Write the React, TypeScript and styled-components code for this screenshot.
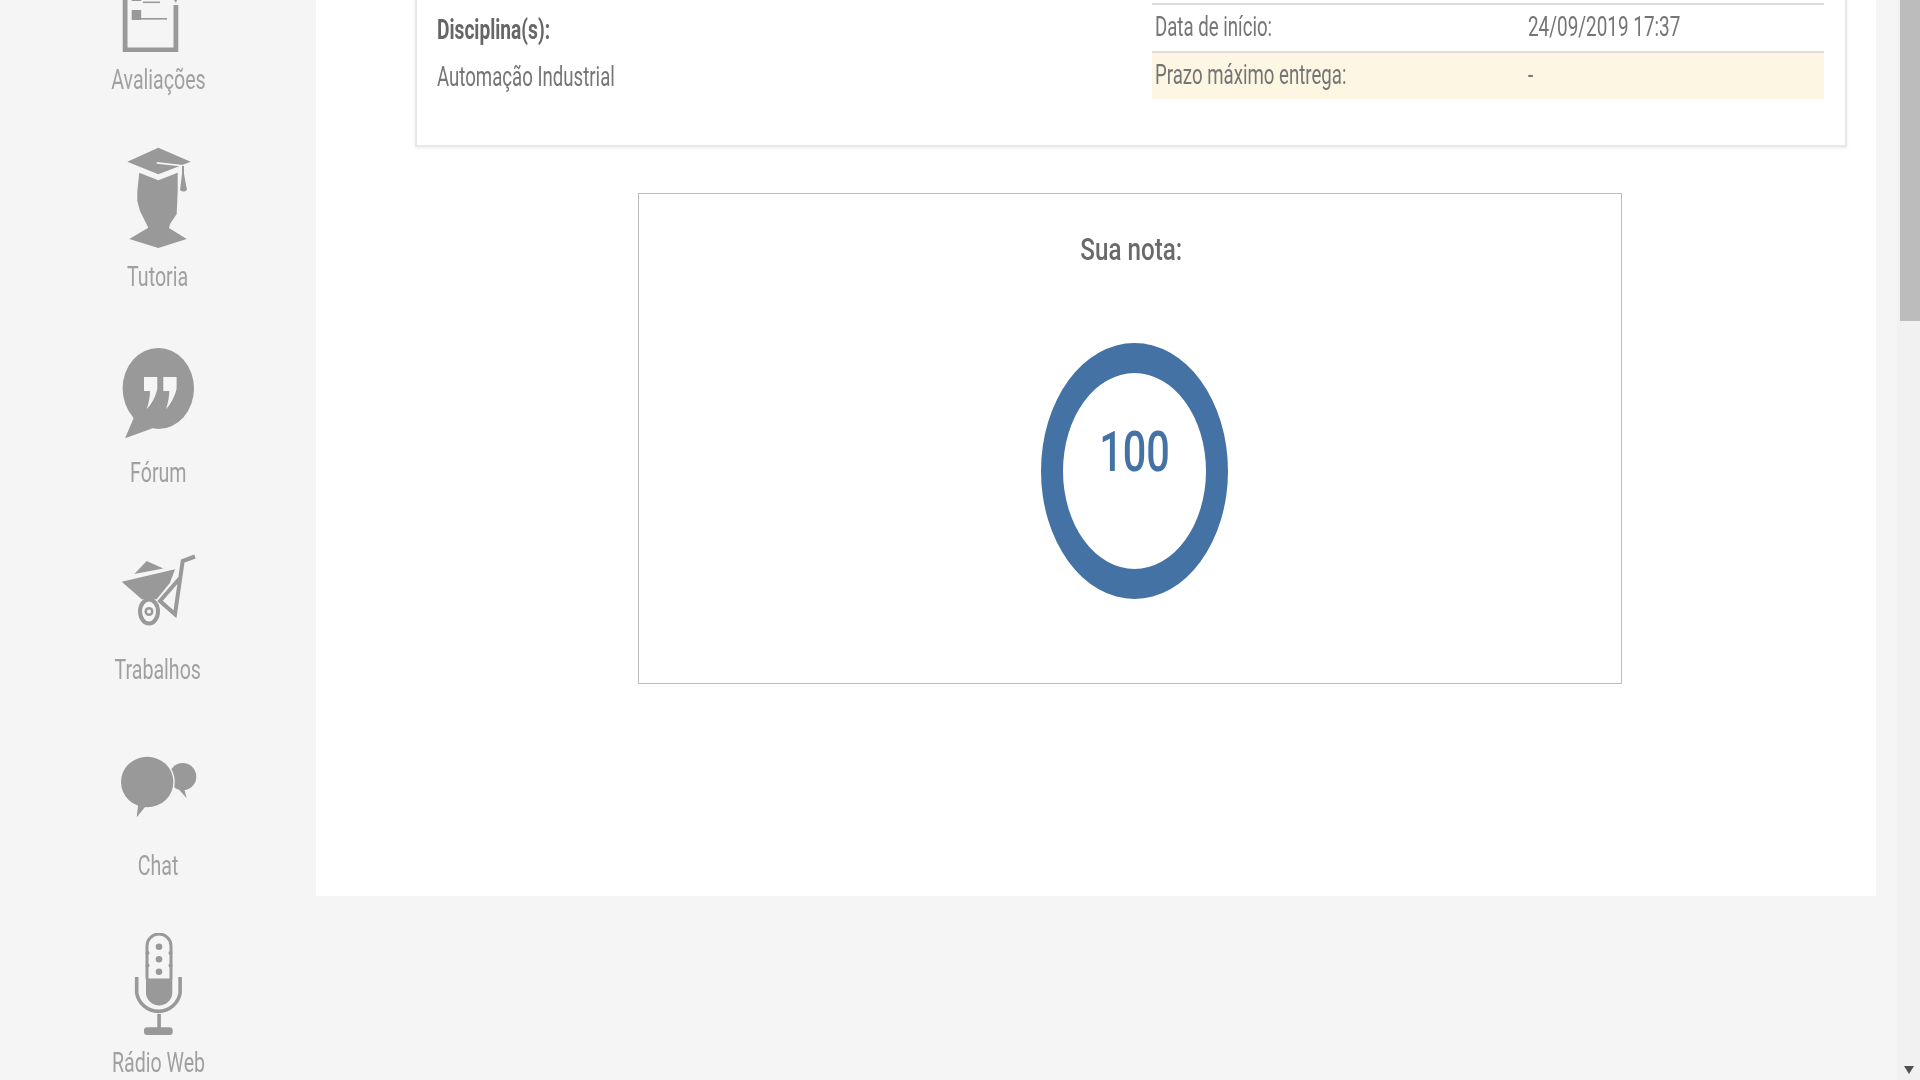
import React from "react";
import styled, { createGlobalStyle } from "styled-components";

const Global = createGlobalStyle`
  html, body { margin: 0; padding: 0; height: 100%; overflow: hidden; background: #f5f5f5; }
  body { font-family: Roboto, "Liberation Sans", sans-serif; }
`;

const Page = styled.div`
  display: flex;
  width: 1920px;
  height: 1080px;
  overflow: hidden;
  background: #f5f5f5;
`;

const Sidebar = styled.nav`
  flex: 0 0 316px;
  display: flex;
  flex-direction: column;
  align-items: center;
  margin-top: -50px;
`;

const NavItem = styled.a`
  flex: 0 0 196.5px;
  display: flex;
  flex-direction: column;
  align-items: center;
`;

const NavIcon = styled.svg`
  flex: 0 0 110px;
  width: 80px;
  height: 110px;
  fill: #999;
  stroke: none;
`;

const NavLabel = styled.span`
  height: 40px;
  line-height: 40px;
  font-size: 28px;
  color: #a0a0a0;
  white-space: nowrap;
  transform: scaleX(0.7);
  filter: blur(0.4px);
`;

const Main = styled.main`
  flex: 0 0 1560px;
  height: 956px;
  margin-top: -60px;
  padding-left: 99px;
  box-sizing: border-box;
  background: #fff;
`;

const Card = styled.section`
  display: flex;
  justify-content: space-between;
  box-sizing: border-box;
  width: 1432px;
  height: 207px;
  padding: 61px 21px 0 20px;
  border: 2px solid #e8e8e8;
  box-shadow: 0 1px 3px rgba(0, 0, 0, 0.08);
`;

const Subject = styled.div`
  display: flex;
  flex-direction: column;
  margin-top: 7px;
  gap: 7px;
`;

const Text = styled.span<{ $x: number; $weight?: number; $color?: string }>`
  display: block;
  height: 40px;
  line-height: 40px;
  font-size: 27px;
  font-weight: ${(p) => p.$weight ?? 400};
  color: ${(p) => p.$color ?? "#757575"};
  white-space: nowrap;
  transform: scaleX(${(p) => p.$x});
  transform-origin: left center;
  filter: blur(0.35px);
`;

const InfoTable = styled.div`
  width: 672px;
  display: flex;
  flex-direction: column;
`;

const InfoRow = styled.div<{ $highlight?: boolean }>`
  display: grid;
  grid-template-columns: 373px 1fr;
  align-items: start;
  box-sizing: border-box;
  height: 48px;
  padding: 2px 0 0 3px;
  border-top: 2px solid #ddd;
  background: ${(p) => (p.$highlight ? "#fdf6e3" : "#fff")};
`;

const ScoreBox = styled.section`
  position: relative;
  display: flex;
  flex-direction: column;
  align-items: center;
  box-sizing: border-box;
  width: 984px;
  height: 491px;
  margin: 46px 0 0 223px;
  padding-top: 35px;
  border: 1px solid #bdbdbd;
`;

const ScoreTitle = styled.h2`
  margin: 0 0 0 2px;
  height: 42px;
  line-height: 42px;
  font-size: 31px;
  font-weight: 500;
  color: #6a6a6a;
  white-space: nowrap;
  transform: scaleX(0.78);
  filter: blur(0.35px);
`;

const Ring = styled.div`
  position: relative;
  box-sizing: border-box;
  width: 187px;
  height: 256px;
  margin: 72px 0 0 9px;
  border-style: solid;
  border-color: #4472a4;
  border-width: 30px 22px;
  border-radius: 50%;
`;

const RingValue = styled.span`
  position: absolute;
  left: 0;
  right: 0;
  top: 51px;
  text-align: center;
  font-size: 56px;
  line-height: 56px;
  font-weight: 500;
  color: #4472a4;
  transform: scaleX(0.74);
  filter: blur(0.3px);
`;

const Gutter = styled.div`
  flex: 0 0 21px;
`;

const Scrollbar = styled.div`
  flex: 0 0 23px;
  display: flex;
  flex-direction: column;
  align-items: flex-end;
  justify-content: space-between;
  background: #f1f1f1;
`;

const Thumb = styled.div`
  width: 20px;
  height: 321px;
  background: #bcbcbc;
`;

const ArrowDown = styled.div`
  width: 0;
  height: 0;
  margin: 0 6px 6px 0;
  border-left: 5px solid transparent;
  border-right: 5px solid transparent;
  border-top: 8px solid #505050;
`;

const BG = "#f5f5f5";

const IconAvaliacoes = () => (
  <NavIcon viewBox="0 0 80 110">
    <rect x="13.7" y="41" width="9.5" height="10" />
    <rect x="25" y="51.5" width="17" height="1.6" />
    <rect x="13.7" y="60" width="9.5" height="10" />
    <rect x="23" y="68" width="26" height="1.6" />
    <path d="M4.7 40H9.5V97.5H55.5V55H60.3V102H4.7Z" />
    <path d="M56 50L59 50L58 53Z" />
  </NavIcon>
);

const IconTutoria = () => (
  <NavIcon viewBox="0 0 80 110">
    <path d="M40.3 .7L72.7 14.7L40.3 27.3L9.3 14.7Z" />
    <path d="M21.3 25.7L40.3 33.3L59.7 25.7V44L58.7 67L52 77L51 81L68.7 92L40.3 101L11.3 92L30.3 80.7L22 64L19.3 54V44Z" />
    <path d="M38.7 15L65.3 18V27H64.2V19.5L38.7 16.8Z" fill={BG} />
    <path d="M64 19H66V27L69 43Q65.5 46 62 43L64 27Z" />
  </NavIcon>
);

const IconForum = () => (
  <NavIcon viewBox="0 0 80 110">
    <ellipse cx="40.3" cy="45.5" rx="35.7" ry="40.5" />
    <path d="M17 72L7 95.3L34 85.5Z" />
    <path d="M26 34H39.3V46Q37 57 28.7 66.3Q32 56 32 48H26Z" fill={BG} />
    <path d="M45.3 34H58.6V46Q56 57 48 66.3Q51.3 56 51.3 48H45.3Z" fill={BG} />
  </NavIcon>
);

const IconTrabalhos = () => (
  <NavIcon viewBox="0 0 80 110">
    <path d="M3.7 41.7L57 29.3L52 42.7L38.7 59.3H23.7Z" />
    <path d="M16.3 34L28.7 21L45.3 28.5Z" />
    <path d="M77 16.5L64.7 21L57 74.3L42 61L62 38" fill="none" stroke="#999" strokeWidth="4" />
    <ellipse cx="31" cy="71.5" rx="9" ry="12" fill="none" stroke="#999" strokeWidth="4" />
    <circle cx="31" cy="71.5" r="4.5" />
    <circle cx="31" cy="71.5" r="2" fill={BG} />
  </NavIcon>
);

const IconChat = () => (
  <NavIcon viewBox="0 0 80 110">
    <circle cx="64.7" cy="40.7" r="13.6" />
    <path d="M58.7 51L68.7 62.3L66 52Z" />
    <ellipse cx="29.2" cy="46" rx="27.6" ry="26.7" fill={BG} />
    <ellipse cx="29.2" cy="46" rx="26.2" ry="25.3" />
    <path d="M28.7 69L18.7 81.3L20.3 67.3Z" />
  </NavIcon>
);

const IconRadio = () => (
  <NavIcon viewBox="0 0 80 110">
    <path d="M29 46V13a12 12 0 0 1 24 0V46" fill="none" stroke="#999" strokeWidth="3" />
    <path d="M28 45.5H54.3V60.5a13.2 13.2 0 0 1-26.3 0Z" />
    <circle cx="41" cy="13.7" r="3.3" />
    <circle cx="41" cy="26.3" r="3.3" />
    <circle cx="41" cy="38.7" r="3.3" />
    <circle cx="29.5" cy="20" r="2" />
    <circle cx="52.5" cy="20" r="2" />
    <circle cx="29.5" cy="32.5" r="2" />
    <circle cx="52.5" cy="32.5" r="2" />
    <path d="M18.7 44V60a22 22 0 0 0 43.4 0V44" fill="none" stroke="#999" strokeWidth="3.6" />
    <rect x="39.3" y="81" width="3.6" height="15" />
    <rect x="26" y="94.3" width="28.7" height="7.7" rx="3" />
  </NavIcon>
);

const nav: [string, React.FC][] = [
  ["Avaliações", IconAvaliacoes],
  ["Tutoria", IconTutoria],
  ["Fórum", IconForum],
  ["Trabalhos", IconTrabalhos],
  ["Chat", IconChat],
  ["Rádio Web", IconRadio],
];

export default function App() {
  return (
    <>
      <Global />
      <Page>
        <Sidebar>
          {nav.map(([label, Icon]) => (
            <NavItem key={label}>
              <Icon />
              <NavLabel>{label}</NavLabel>
            </NavItem>
          ))}
        </Sidebar>
        <Main>
          <Card>
            <Subject>
              <Text $x={0.71} $weight={700} $color="#666">Disciplina(s):</Text>
              <Text $x={0.69}>Automação Industrial</Text>
            </Subject>
            <InfoTable>
              <InfoRow>
                <Text $x={0.69}>Data de início:</Text>
                <Text $x={0.7}>24/09/2019 17:37</Text>
              </InfoRow>
              <InfoRow $highlight>
                <Text $x={0.69}>Prazo máximo entrega:</Text>
                <Text $x={0.7}>-</Text>
              </InfoRow>
            </InfoTable>
          </Card>
          <ScoreBox>
            <ScoreTitle>Sua nota:</ScoreTitle>
            <Ring>
              <RingValue>100</RingValue>
            </Ring>
          </ScoreBox>
        </Main>
        <Gutter />
        <Scrollbar>
          <Thumb />
          <ArrowDown />
        </Scrollbar>
      </Page>
    </>
  );
}
